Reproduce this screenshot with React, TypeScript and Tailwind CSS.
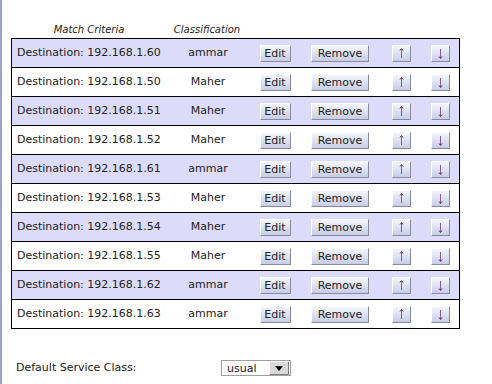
import React from 'react'

const rules = [
  { ip: '192.168.1.60', cls: 'ammar' },
  { ip: '192.168.1.50', cls: 'Maher' },
  { ip: '192.168.1.51', cls: 'Maher' },
  { ip: '192.168.1.52', cls: 'Maher' },
  { ip: '192.168.1.61', cls: 'ammar' },
  { ip: '192.168.1.53', cls: 'Maher' },
  { ip: '192.168.1.54', cls: 'Maher' },
  { ip: '192.168.1.55', cls: 'Maher' },
  { ip: '192.168.1.62', cls: 'ammar' },
  { ip: '192.168.1.63', cls: 'ammar' },
]

function Btn({ children, w }: { children: React.ReactNode; w: string }) {
  return (
    <button
      className={`${w} h-[17px] flex items-center justify-center text-[11px] leading-none text-[#222] bg-gradient-to-b from-[#f4f5fc] to-[#c6cde6] border border-t-white border-l-white border-r-[#8a8a9a] border-b-[#8a8a9a]`}
    >
      {children}
    </button>
  )
}

// thin arrow like the old win-style glyph
function Arrow({ up }: { up?: boolean }) {
  return (
    <svg width="5" height="10" viewBox="0 0 5 10" className={up ? '' : 'mt-[2px]'}>
      {up ? (
        <>
          <path d="M2.5 1V10" stroke="#8a5a8a" strokeWidth="1" />
          <path d="M1 2.5L2.5 0.5L4 2.5" stroke="#6a2a6a" strokeWidth="1" fill="none" />
        </>
      ) : (
        <>
          <path d="M2.5 0V9" stroke="#8a5a8a" strokeWidth="1" />
          <path d="M1 7.5L2.5 9.5L4 7.5" stroke="#6a2a6a" strokeWidth="1" fill="none" />
        </>
      )}
    </svg>
  )
}

export default function App() {
  return (
    <div
      className="w-[492px] h-[384px] bg-white border-l-2 border-[#a0a0d0] text-[11px] text-[#222] overflow-hidden"
      style={{ fontFamily: '"DejaVu Sans", Verdana, sans-serif' }}
    >
      <div className="ml-[9px] w-[449px] pt-[20px]">
        <div className="flex h-[18px] items-center italic text-[10px]">
          <div className="w-[153px] text-center pl-[3px]">Match Criteria</div>
          <div className="w-[86px] text-center">Classification</div>
        </div>
        <div className="border border-black">
          {rules.map((r, i) => (
            <div
              key={r.ip}
              className={`flex items-center ${i > 0 ? 'border-t border-black h-[29px]' : 'h-[28px]'} ${i % 2 === 0 ? 'bg-[#dcdcfa]' : 'bg-white'}`}
            >
              <div className="w-[153px] pl-[5px] whitespace-nowrap">Destination: {r.ip}</div>
              <div className="w-[86px] text-center">{r.cls}</div>
              <div className="w-[48px] flex justify-center">
                <Btn w="w-[31px]">Edit</Btn>
              </div>
              <div className="w-[82px] flex justify-center">
                <Btn w="w-[58px]">Remove</Btn>
              </div>
              <div className="w-[40px] flex justify-center">
                <Btn w="w-[19px]"><Arrow up /></Btn>
              </div>
              <div className="w-[38px] flex justify-center">
                <Btn w="w-[19px]"><Arrow /></Btn>
              </div>
            </div>
          ))}
        </div>
      </div>
      <div className="flex items-center mt-[31px] pl-[14px]">
        <div className="w-[205px]">Default Service Class:</div>
        <div className="w-[70px] h-[16px] border border-[#a0a0a0] bg-white flex items-center justify-between">
          <span className="pl-[5px] leading-none">usual</span>
          <span className="w-[20px] h-[14px] mr-[1px] bg-[#d8d8d8] border border-t-white border-l-white border-r-[#808080] border-b-[#808080] flex items-center justify-center">
            <svg width="8" height="5" viewBox="0 0 8 5">
              <path d="M0 0H8L4 5Z" fill="#000" />
            </svg>
          </span>
        </div>
      </div>
    </div>
  )
}
